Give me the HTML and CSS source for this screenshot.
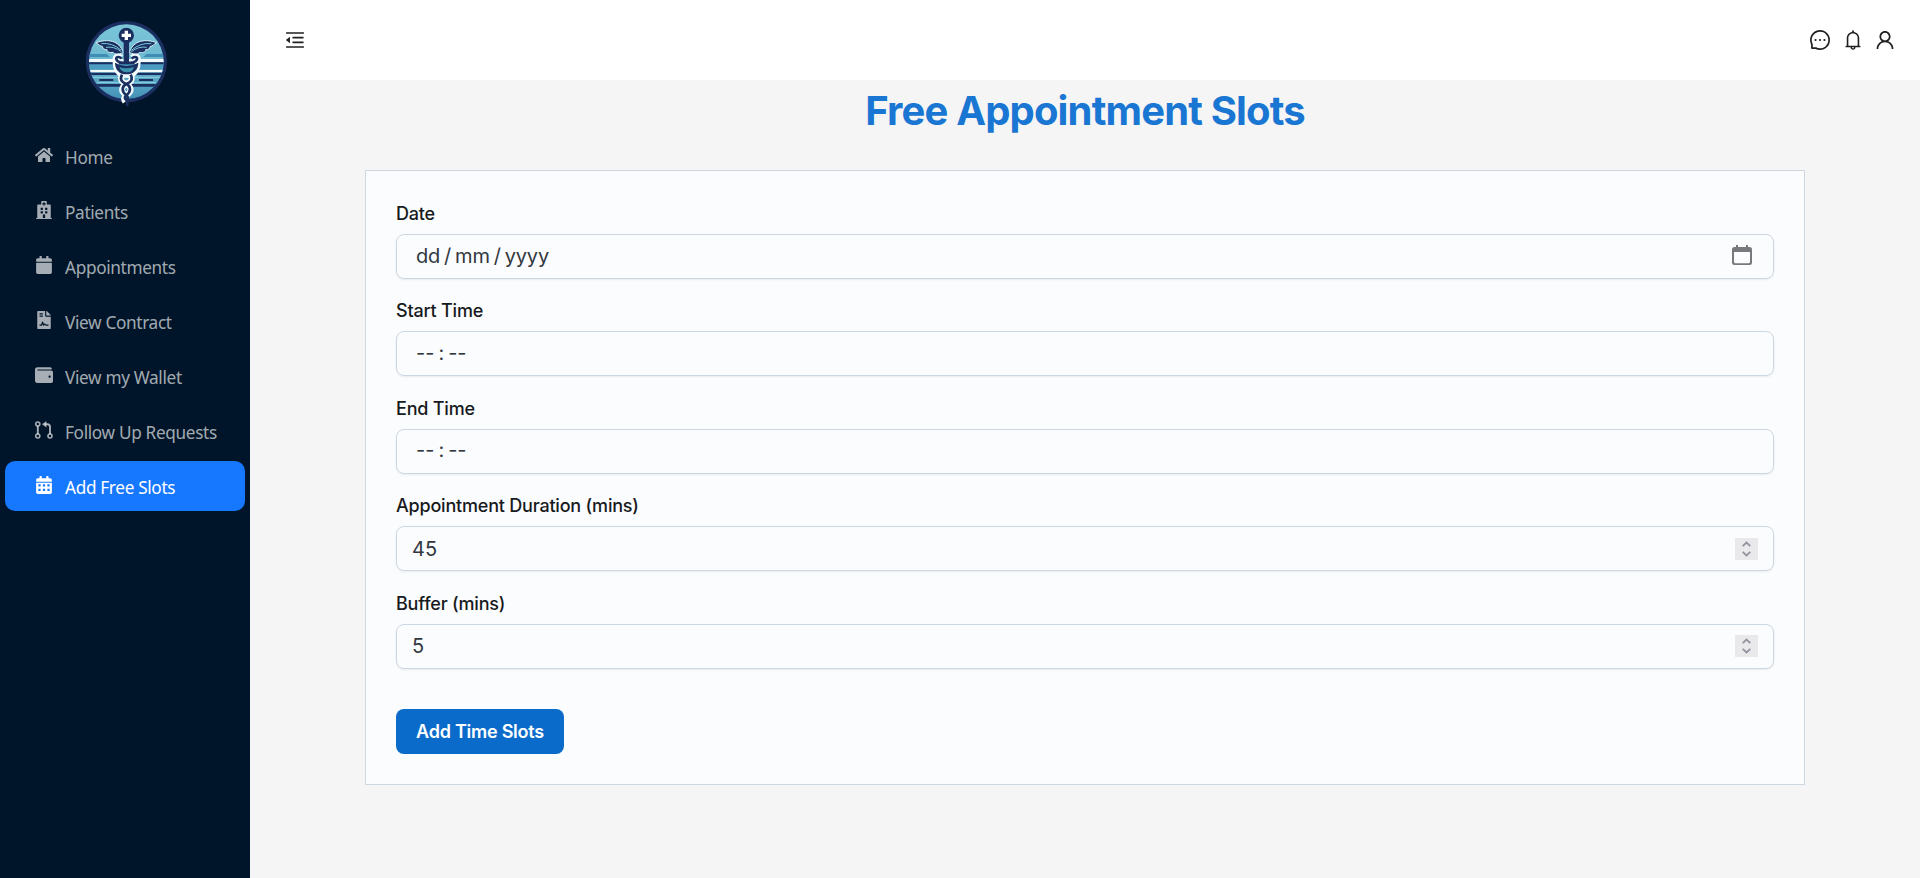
FILE: index.html
```html
<!DOCTYPE html>
<html lang="en">
<head>
<meta charset="utf-8">
<title>Free Appointment Slots</title>
<link rel="stylesheet" href="styles.css">
</head>
<body>
<div class="layout">
  <aside class="sidebar">
    <svg class="logo" viewBox="0 0 330 300">
      <defs><clipPath id="disc"><circle cx="169" cy="155" r="112"/></clipPath>
      <linearGradient id="sky" x1="0" y1="0" x2="0" y2="1"><stop offset="0" stop-color="#7cc6d9"/><stop offset=".5" stop-color="#6bb7d0"/><stop offset="1" stop-color="#3f8db4"/></linearGradient></defs>
      <circle cx="169" cy="155" r="122" fill="#1a2f60"/>
      <g clip-path="url(#disc)">
        <rect x="50" y="40" width="240" height="240" fill="url(#sky)"/>
        <path d="M50 132h60l10 9H50zM290 132h-60l-10 9h70z" fill="#3f8db4"/>
        <path d="M50 147h240v9H50zM50 179h240v8H50z" fill="#f4fbfd"/>
        <path d="M50 157h240v22H50z" fill="#4b9cc0"/>
        <path d="M50 157h240v6H50zM50 188h240v7H50zM50 222h240v8H50z" fill="#1a2f60"/>
        <path d="M88 210h42M207 210h42" stroke="#1a2f60" stroke-width="6"/>
        <path d="M62 202h216M80 218h178" stroke="#8fd0e0" stroke-width="3"/>
      </g>
      <g fill="none" stroke="#f4fbfd" stroke-width="18" stroke-linejoin="round">
        <path d="M155 143c-14-8-22-2-16 8l-2 8c0 18 10 33 22 35h22c12-2 22-17 22-35l-2-8c6-10-2-16-16-8"/>
        <path d="M156 194c-8 16 0 22 13 28 13-6 21-12 13-28M169 222c-16 10-18 22 0 34 18-12 16-24 0-34M169 256c-8 6-8 12-3 19"/>
      </g>
      <path d="M160 128C148 90 112 86 78 98c8 5 12 10 20 12-1 6 5 9 13 9 0 8 10 10 18 8 4 6 14 6 31 1zM178 128c12-38 48-42 82-30-8 5-12 10-20 12 1 6-5 9-13 9 0 8-10 10-18 8-4 6-14 6-31 1z" fill="#1a2f60" stroke="#d2edf3" stroke-width="3"/>
      <path d="M94 101q32-4 60 20M108 112q24-4 46 13M244 101q-32-4-60 20M230 112q-24-4-46 13" fill="none" stroke="#7cc6d9" stroke-width="3"/>
      <path d="M161 92h16v64h-16z" fill="#1a2f60"/>
      <circle cx="169" cy="76" r="23" fill="#1a2f60"/>
      <path d="M164 62h10v9h9v10h-9v9h-10v-9h-9V71h9z" fill="#fff"/>
      <path d="M155 145c-14-8-20-2-14 6 6 10 52 10 58 0 6-8 0-14-14-6" fill="none" stroke="#1a2f60" stroke-width="8"/>
      <path d="M135 158c0 22 14 35 34 35s36-13 36-35q-36 20-70 0z" fill="#1a2f60"/>
      <path d="M148 171q20 8 44 0c-5 14-12 16-22 16s-18-5-22-16z" fill="#3c93ad"/>
      <path d="M156 194c-8 16 0 22 13 28s16 22 0 34M182 194c8 16 0 22-13 28s-16 22 0 34M169 256c-8 6-4 10 0 14s4 8 2 18M169 256c6 4 5 8 2 12" fill="none" stroke="#1a2f60" stroke-width="8"/>
    </svg>
    <nav class="menu">
      <a class="item"><svg class="ico" viewBox="0 0 576 512"><path d="M280.37 148.26L96 300.11V464a16 16 0 0 0 16 16l112.06-.29a16 16 0 0 0 15.92-16V368a16 16 0 0 1 16-16h64a16 16 0 0 1 16 16v95.64a16 16 0 0 0 16 16.05L464 480a16 16 0 0 0 16-16V300L295.67 148.26a12.19 12.19 0 0 0-15.3 0zM571.6 251.47L488 182.56V44.05a12 12 0 0 0-12-12h-56a12 12 0 0 0-12 12v72.61L318.47 43a48 48 0 0 0-61 0L4.34 251.47a12 12 0 0 0-1.6 16.9l25.5 31A12 12 0 0 0 45.15 301l235.22-193.74a12.19 12.19 0 0 1 15.3 0L530.9 301a12 12 0 0 0 16.9-1.6l25.5-31a12 12 0 0 0-1.7-16.93z"/></svg><span>Home</span></a>
      <a class="item"><svg class="ico" viewBox="0 0 448 512"><path d="M448 492v20H0v-20c0-6.627 5.373-12 12-12h20V120c0-13.255 10.745-24 24-24h88V24c0-13.255 10.745-24 24-24h112c13.255 0 24 10.745 24 24v72h88c13.255 0 24 10.745 24 24v360h20c6.627 0 12 5.373 12 12zM308 192h-40c-6.627 0-12 5.373-12 12v40c0 6.627 5.373 12 12 12h40c6.627 0 12-5.373 12-12v-40c0-6.627-5.373-12-12-12zm-168 64h40c6.627 0 12-5.373 12-12v-40c0-6.627-5.373-12-12-12h-40c-6.627 0-12 5.373-12 12v40c0 6.627 5.373 12 12 12zm104 128h-40c-6.627 0-12 5.373-12 12v84h64v-84c0-6.627-5.373-12-12-12zm64-96h-40c-6.627 0-12 5.373-12 12v40c0 6.627 5.373 12 12 12h40c6.627 0 12-5.373 12-12v-40c0-6.627-5.373-12-12-12zm-116 12c0-6.627-5.373-12-12-12h-40c-6.627 0-12 5.373-12 12v40c0 6.627 5.373 12 12 12h40c6.627 0 12-5.373 12-12v-40zM182 96h26v26a6 6 0 0 0 6 6h20a6 6 0 0 0 6-6V96h26a6 6 0 0 0 6-6V70a6 6 0 0 0-6-6h-26V38a6 6 0 0 0-6-6h-20a6 6 0 0 0-6 6v26h-26a6 6 0 0 0-6 6v20a6 6 0 0 0 6 6z"/></svg><span>Patients</span></a>
      <a class="item"><svg class="ico" viewBox="0 0 448 512"><path d="M12 192h424c6.6 0 12 5.4 12 12v260c0 26.5-21.5 48-48 48H48c-26.5 0-48-21.5-48-48V204c0-6.6 5.4-12 12-12zm436-44v-36c0-26.5-21.5-48-48-48h-48V12c0-6.6-5.4-12-12-12h-40c-6.6 0-12 5.4-12 12v52H160V12c0-6.6-5.4-12-12-12h-40c-6.6 0-12 5.4-12 12v52H48C21.5 64 0 85.5 0 112v36c0 6.6 5.4 12 12 12h424c6.6 0 12-5.4 12-12z"/></svg><span>Appointments</span></a>
      <a class="item"><svg class="ico" viewBox="0 0 384 512"><path fill-rule="evenodd" d="M224 136V0H24C10.7 0 0 10.7 0 24v464c0 13.3 10.7 24 24 24h336c13.3 0 24-10.7 24-24V160H248c-13.2 0-24-10.8-24-24zM64 64h96v32H64zM64 128h96v32H64zM256 384h64v32h-64q-25 0-38-20-7-10-14 0l-14 20q-12 10-24-2l-16-46-16 48H64v-32h47l26-76q14-20 28 0l20 58q34-22 58 8z"/><path d="M256 0v128h128v-6c0-6-3-12-7-17L279 7c-5-4-11-7-17-7z"/></svg><span>View Contract</span></a>
      <a class="item"><svg class="ico" viewBox="0 0 512 512"><path d="M461.2 128H80c-8.84 0-16-7.16-16-16s7.16-16 16-16h384c8.84 0 16-7.16 16-16 0-26.51-21.49-48-48-48H64C28.65 32 0 60.65 0 96v320c0 35.35 28.65 64 64 64h397.2c28.02 0 50.8-21.53 50.8-48V176c0-26.47-22.78-48-50.8-48zM416 336c-17.67 0-32-14.33-32-32s14.33-32 32-32 32 14.33 32 32-14.33 32-32 32z"/></svg><span>View my Wallet</span></a>
      <a class="item"><svg class="ico" viewBox="0 0 18 18"><g fill="none" stroke="currentColor" stroke-width="1.6"><circle cx="2.8" cy="3" r="2"/><circle cx="2.8" cy="15" r="2"/><circle cx="15" cy="15" r="2"/><path d="M2.8 5v8M10 3.2h2.4q2.6 0 2.6 2.6V13" stroke-width="1.9"/></g><path d="M7 3.2L11.4 0v6.4z"/></svg><span>Follow Up Requests</span></a>
      <a class="item active"><svg class="ico" viewBox="0 0 448 512"><path fill-rule="evenodd" d="M0 464c0 26.5 21.5 48 48 48h352c26.500 0 48-21.500 48-48V192H0zM64 236h64v60H64zM192 236h64v60h-64zM320 236h64v60h-64zM64 364h64v60H64zM192 364h64v60h-64zM320 364h64v60h-64zM400 64h-48V16q0-16-16-16h-32q-16 0-16 16v48H160V16q0-16-16-16h-32q-16 0-16 16v48H48C21.500 64 0 85.500 0 112v48h448v-48c0-26.500-21.500-48-48-48z"/></svg><span>Add Free Slots</span></a>
    </nav>
  </aside>
  <div class="main">
    <header class="topbar">
      <svg class="tool" viewBox="64 64 896 896"><path d="M408 442h480c4.400 0 8-3.600 8-8v-56c0-4.400-3.600-8-8-8H408c-4.400 0-8 3.600-8 8v56c0 4.400 3.600 8 8 8zm-8 204c0 4.400 3.600 8 8 8h480c4.400 0 8-3.600 8-8v-56c0-4.400-3.600-8-8-8H408c-4.400 0-8 3.600-8 8v56zm504-486H120c-4.400 0-8 3.600-8 8v56c0 4.400 3.600 8 8 8h784c4.400 0 8-3.600 8-8v-56c0-4.400-3.600-8-8-8zm0 632H120c-4.400 0-8 3.600-8 8v56c0 4.400 3.600 8 8 8h784c4.400 0 8-3.600 8-8v-56c0-4.400-3.600-8-8-8zM115.400 518.900L271.700 642c5.800 4.600 14.400.5 14.400-6.900V388.900c0-7.400-8.500-11.500-14.400-6.900L115.400 505.100a8.740 8.740 0 0 0 0 13.800z"/></svg>
      <div class="tools">
        <svg class="tool" viewBox="64 64 896 896"><path d="M464 512a48 48 0 1 0 96 0 48 48 0 1 0-96 0zm200 0a48 48 0 1 0 96 0 48 48 0 1 0-96 0zm-400 0a48 48 0 1 0 96 0 48 48 0 1 0-96 0zm661.200-173.600c-22.600-53.700-55-101.900-96.300-143.300a444.350 444.350 0 0 0-143.300-96.300C630.600 75.700 572.200 64 512 64h-2c-60.600.3-119.300 12.300-174.500 35.900a445.350 445.350 0 0 0-142 96.500c-40.900 41.300-73 89.300-95.200 142.800-23 55.400-34.600 114.300-34.300 174.900A449.400 449.400 0 0 0 112 714v152a46 46 0 0 0 46 46h152.100A449.400 449.400 0 0 0 510 960h2.100c59.900 0 118-11.600 172.700-34.300a444.480 444.480 0 0 0 142.800-95.200c41.300-40.900 73.800-88.700 96.500-142 23.600-55.200 35.600-113.900 35.900-174.500.3-60.900-11.500-120-34.800-175.600zm-151.100 438C704 845.800 611 884 512 884h-1.700c-60.300-.3-120.200-15.300-173.100-43.500l-8.400-4.500H188V695.200l-4.500-8.400C155.300 633.900 140.300 574 140 513.700c-.4-99.700 37.700-193.300 107.600-263.800 69.800-70.500 163.100-109.500 262.800-109.900h1.700c50 0 98.500 9.700 144.200 28.900 44.600 18.700 84.600 45.600 119 80 34.300 34.300 61.300 74.400 80 119 19.400 46.200 29.100 95.200 28.900 145.800-.6 99.600-39.700 192.900-110.100 262.700z"/></svg>
        <svg class="tool" viewBox="64 64 896 896"><path d="M816 768h-24V428c0-141.100-104.300-257.700-240-277.100V112c0-22.100-17.900-40-40-40s-40 17.900-40 40v38.900c-135.700 19.400-240 136-240 277.100v340h-24c-17.700 0-32 14.300-32 32v32c0 4.400 3.600 8 8 8h216c0 61.800 50.200 112 112 112s112-50.200 112-112h216c4.400 0 8-3.600 8-8v-32c0-17.700-14.300-32-32-32zM512 888c-26.500 0-48-21.500-48-48h96c0 26.500-21.500 48-48 48zM304 768V428c0-55.600 21.600-107.800 60.900-147.100S456.400 220 512 220c55.600 0 107.800 21.600 147.100 60.900S720 372.400 720 428v340H304z"/></svg>
        <svg class="tool" viewBox="64 64 896 896"><path d="M858.500 763.600a374 374 0 0 0-80.600-119.500 375.630 375.630 0 0 0-119.500-80.600c-.4-.2-.8-.3-1.200-.5C719.500 518 760 444.700 760 362c0-137-111-248-248-248S264 225 264 362c0 82.700 40.500 156 102.800 201.100-.4.2-.8.3-1.200.5-44.800 18.900-85 46-119.500 80.600a375.630 375.630 0 0 0-80.600 119.500A371.700 371.700 0 0 0 136 901.800a8 8 0 0 0 8 8.200h60c4.400 0 7.900-3.500 8-7.800 2-77.200 33-149.500 87.800-204.300 56.700-56.700 132-87.900 212.200-87.900s155.500 31.200 212.200 87.900C779 752.700 810 825 812 902.200c.1 4.400 3.600 7.800 8 7.800h60a8 8 0 0 0 8-8.200c-1-47.800-10.900-94.300-29.500-138.200zM512 534c-45.900 0-89.100-17.900-121.600-50.400S340 407.900 340 362c0-45.900 17.900-89.100 50.400-121.600S466.100 190 512 190s89.100 17.900 121.600 50.400S684 316.100 684 362c0 45.900-17.900 89.100-50.400 121.600S557.900 534 512 534z"/></svg>
      </div>
    </header>
    <h1 class="title">Free Appointment Slots</h1>
    <form class="card">
      <div class="field"><label class="label">Date</label>
        <div class="input picker"><span class="parts date"><span>dd</span><span>/</span><span>mm</span><span>/</span><span>yyyy</span></span>
          <svg class="cal" viewBox="0 0 20 20"><path fill-rule="evenodd" d="M4 0h2v2h8V0h2v2h1.500Q20 2 20 4.500V17.500Q20 20 17.500 20h-15Q0 20 0 17.500v-13Q0 2 2.500 2H4zM2 7v9.800Q2 18.300 3.500 18.300h13Q18 18.300 18 16.800V7z"/></svg></div></div>
      <div class="field"><label class="label">Start Time</label>
        <div class="input picker"><span class="parts"><span>--</span><span>:</span><span>--</span></span></div></div>
      <div class="field"><label class="label">End Time</label>
        <div class="input picker"><span class="parts"><span>--</span><span>:</span><span>--</span></span></div></div>
      <div class="field"><label class="label">Appointment Duration (mins)</label>
        <div class="input"><span>45</span><span class="spin"><svg viewBox="0 0 23 22"><path d="M7.700 8.200l3.800-3.700 3.800 3.700M7.700 13.800l3.800 3.700 3.800-3.700"/></svg></span></div></div>
      <div class="field"><label class="label">Buffer (mins)</label>
        <div class="input"><span>5</span><span class="spin"><svg viewBox="0 0 23 22"><path d="M7.700 8.200l3.800-3.700 3.800 3.700M7.700 13.800l3.800 3.700 3.800-3.700"/></svg></span></div></div>
      <button class="submit" type="button">Add Time Slots</button>
    </form>
  </div>
</div>
</body>
</html>
```
FILE: styles.css
```css
* { box-sizing: border-box; }
body { margin: 0; background: #f5f5f5; }
.layout { display: flex; height: 878px; }
.sidebar { width: 250px; flex: none; background: #001529; padding: 10px 5px; display: flex; flex-direction: column; }
.logo { width: 110px; height: 100px; margin-left: 65px; }
.menu { margin-top: 21px; display: flex; flex-direction: column; gap: 5px; }
.item { height: 50px; display: flex; align-items: center; gap: 12px; padding-left: 30px; border-radius: 10px; color: rgba(255,255,255,.65); font: 17.2px "Noto Sans", sans-serif; letter-spacing: -.33px; white-space: nowrap; }
.item span { padding-top: 2px; }
.item.active { background: #1677ff; color: #fff; }
.ico { width: 18px; height: 18px; fill: currentColor; margin-bottom: 2px; }
.main { flex: 1; display: flex; flex-direction: column; align-items: center; }
.topbar { align-self: stretch; height: 80px; background: #fff; display: flex; align-items: center; justify-content: space-between; padding: 0 25px 0 35px; }
.tool { width: 20px; height: 20px; fill: rgba(0,0,0,.88); }
.tools { display: flex; gap: 12.5px; }
.title { margin: 0; height: 90px; padding-top: 4px; font: 700 40px/54px Inter, sans-serif; letter-spacing: -.84px; color: #1976d2; }
.card { width: 1440px; height: 615px; background: #fbfcfe; border: 1px solid #cdd7e1; padding: 30px; display: flex; flex-direction: column; align-items: flex-start; gap: 19.4px; font: 20px Inter, sans-serif; }
.field { align-self: stretch; display: flex; flex-direction: column; gap: 7px; }
.label { font-size: 18px; font-weight: 500; line-height: 26px; letter-spacing: -.2px; color: #171a1c; }
.input { height: 45px; border: 1px solid #cdd7e1; border-radius: 8px; box-shadow: 0 1px 2px rgba(21,21,21,.08); padding: 0 15px; display: flex; align-items: center; justify-content: space-between; color: #32383e; }
.picker { padding: 0 21px 2px 19px; }
.parts { display: flex; gap: 4px; }
.date { letter-spacing: -.2px; }
.cal { width: 20px; height: 20px; fill: #77797d; margin-bottom: 1px; }
.spin { width: 23px; height: 22px; background: #e9e9ec; display: flex; }
.spin path { fill: none; stroke: #9493a0; stroke-width: 1.8; }
.submit { margin-top: 20.9px; width: 168px; height: 45px; border: 0; border-radius: 8px; background: #0b6bcb; color: #fff; font: 600 18px Inter, sans-serif; letter-spacing: -.25px; padding: 0; }
```
